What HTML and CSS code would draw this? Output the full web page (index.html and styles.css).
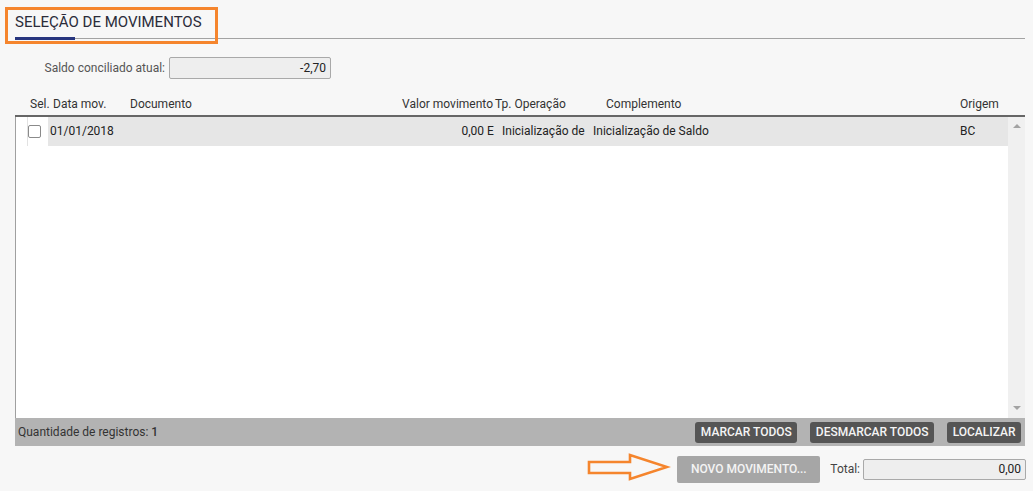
FILE: index.html
```html
<!DOCTYPE html>
<html lang="pt">
<head>
<meta charset="utf-8">
<title>Seleção de movimentos</title>
<link rel="stylesheet" href="styles.css">
</head>
<body>
<div class="page">
  <div class="tabs">
    <div class="tab active">SELEÇÃO DE MOVIMENTOS</div>
    <div class="tab-rest"></div>
  </div>

  <div class="saldo-row">
    <label class="saldo-label">Saldo conciliado atual:</label>
    <div class="field saldo-field">-2,70</div>
  </div>

  <div class="grid-head">
    <span class="h-sel">Sel.</span>
    <span class="h-data">Data mov.</span>
    <span class="h-doc">Documento</span>
    <span class="h-valor">Valor movimento</span>
    <span class="h-op">Tp. Operação</span>
    <span class="h-comp">Complemento</span>
    <span class="h-orig">Origem</span>
  </div>

  <div class="grid">
    <div class="grid-body">
      <div class="rows">
        <div class="row">
          <div class="c c-sel"><span class="sel-box"><span class="checkbox"></span></span></div>
          <div class="c c-data">01/01/2018</div>
          <div class="c c-doc"></div>
          <div class="c c-valor">0,00</div>
          <div class="c c-tipo">E</div>
          <div class="c c-op">Inicialização de</div>
          <div class="c c-comp">Inicialização de Saldo</div>
          <div class="c c-orig">BC</div>
        </div>
      </div>
      <div class="scrollbar">
        <span class="arrow-up"></span>
        <span class="arrow-down"></span>
      </div>
    </div>
    <div class="grid-foot">
      <span class="count">Quantidade de registros: <b>1</b></span>
      <div class="foot-buttons">
        <button class="btn-dark">MARCAR TODOS</button>
        <button class="btn-dark">DESMARCAR TODOS</button>
        <button class="btn-dark">LOCALIZAR</button>
      </div>
    </div>
  </div>

  <div class="bottom-row">
    <button class="btn-gray">NOVO MOVIMENTO...</button>
    <span class="total-label">Total:</span>
    <div class="field total-field">0,00</div>
  </div>
</div>

<div class="annot-box"></div>
<svg class="annot-arrow" width="84" height="30" viewBox="0 0 84 30">
  <polygon points="2,9 43,9 43,2 80,14 43,26 43,20 2,20" fill="none" stroke="#f5852d" stroke-width="2.6" stroke-linejoin="miter"/>
</svg>
</body>
</html>
```

FILE: styles.css
```css
* { box-sizing: border-box; }

body {
  margin: 0;
  background: #f7f7f7;
  font-family: Roboto, "Liberation Sans", Arial, sans-serif;
  font-size: 12px;
  color: #333;
  position: relative;
  width: 1033px;
  height: 491px;
  overflow: hidden;
}

.page {
  margin-left: 15px;
  width: 1010px;
  display: flex;
  flex-direction: column;
}

/* Tabs */
.tabs {
  display: flex;
  align-items: flex-end;
  padding-top: 12px;
}
.tab {
  font-size: 15px;
  line-height: 20px;
  color: #2b2c3a;
  padding-bottom: 5px;
  white-space: nowrap;
  width: 60px;
  overflow: visible;
}
.tab.active {
  border-bottom: 3px solid #27357e;
}
.tab-rest {
  flex: 1;
  border-bottom: 1px solid #a3a3a3;
  margin-bottom: 1px;
}

/* Saldo */
.saldo-row {
  display: flex;
  align-items: center;
  margin-top: 17px;
  height: 22px;
}
.saldo-label {
  width: 150px;
  text-align: right;
  color: #555;
  margin-right: 4px;
}
.field {
  height: 22px;
  background: #eeeeee;
  border: 1px solid #a9a9a9;
  border-radius: 2px;
  text-align: right;
  padding-right: 4px;
  line-height: 20px;
  color: #222;
}
.saldo-field { width: 162px; }

/* Header */
.grid-head {
  display: flex;
  margin-top: 17px;
  height: 19px;
  line-height: 16px;
  color: #333;
  white-space: nowrap;
}
.grid-head span { display: block; }
.h-sel { margin-left: 15px; width: 23px; }
.h-data { width: 77px; }
.h-doc { width: 271px; }
.h-valor { width: 92px; text-align: right; }
.h-op { margin-left: 2px; width: 111px; }
.h-comp { width: 354px; }
.h-orig { width: 50px; }

/* Grid */
.grid {
  border-top: 2px solid #666;
}
.grid-body {
  display: flex;
  height: 301px;
  background: #fff;
  border-left: 1px solid #a0a0a0;
}
.rows {
  width: 992px;
}
.row {
  display: grid;
  grid-template-columns: 32px 74px 256px 106px 14px 92px 365px 53px;
  height: 29px;
  background: #e6e6e6;
  line-height: 29px;
  color: #222;
}
.c { white-space: nowrap; overflow: hidden; }
.c-sel {
  background: #fff;
  padding-left: 11px;
  display: flex;
}
.sel-box {
  display: flex;
  align-items: center;
  border-left: 1px solid #e2e2e2;
  width: 21px;
}
.checkbox {
  width: 13px;
  height: 13px;
  border: 1px solid #8a8a8a;
  border-radius: 2px;
  background: #fff;
}
.c-data { padding-left: 2px; }
.c-valor { text-align: right; }
.c-tipo { padding-left: 3px; }
.c-op { padding-left: 4px; }
.c-comp { padding-left: 3px; }
.c-orig { padding-left: 5px; }

.scrollbar {
  width: 17px;
  background: #f0f0f0;
  position: relative;
}
.arrow-up, .arrow-down {
  position: absolute;
  left: 5px;
  width: 0;
  height: 0;
  border-left: 4px solid transparent;
  border-right: 4px solid transparent;
}
.arrow-up {
  top: 7px;
  border-bottom: 4px solid #a3a3a3;
}
.arrow-down {
  bottom: 8px;
  border-top: 4px solid #a3a3a3;
}

.grid-foot {
  height: 28px;
  background: #b3b3b3;
  display: flex;
  align-items: center;
  justify-content: space-between;
  padding-left: 3px;
  padding-right: 4px;
}
.count { color: #333; }
.count b { font-weight: 500; }
.foot-buttons {
  display: flex;
  gap: 13px;
}
.btn-dark {
  font-family: Roboto, "Liberation Sans", Arial, sans-serif;
  font-size: 12px;
  font-weight: 500;
  color: #f4f4f4;
  background: #555555;
  border: none;
  border-radius: 3px;
  height: 21px;
  padding: 0 5.5px;
  line-height: 21px;
}

/* Bottom */
.bottom-row {
  display: flex;
  justify-content: flex-end;
  align-items: center;
  margin-top: 9px;
  height: 28px;
  margin-right: -1px;
}
.btn-gray {
  font-family: Roboto, "Liberation Sans", Arial, sans-serif;
  font-size: 12px;
  font-weight: 500;
  color: #f4f4f4;
  background: #a6a6a6;
  border: none;
  border-radius: 2px;
  height: 27px;
  width: 143px;
  padding: 0;
}
.total-label {
  margin-left: 10px;
  margin-right: 3px;
  color: #444;
}
.total-field { width: 163px; height: 21px; line-height: 19px; }

/* Annotations */
.annot-box {
  position: absolute;
  left: 5px;
  top: 7px;
  width: 213px;
  height: 37px;
  border: 3px solid #f5852d;
}
.annot-arrow {
  position: absolute;
  left: 587px;
  top: 453px;
}
```
